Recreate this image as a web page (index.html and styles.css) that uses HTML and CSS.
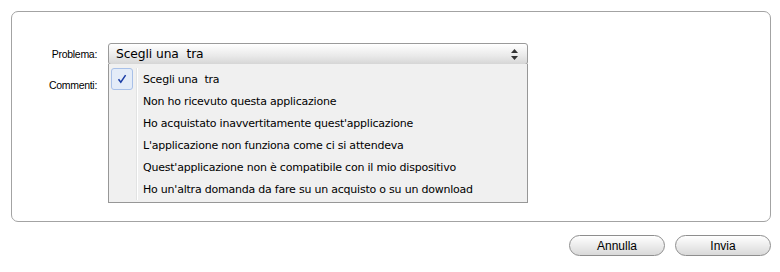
FILE: index.html
```html
<!DOCTYPE html>
<html lang="it">
<head>
    <meta charset="UTF-8">
    <title>Segnala un problema</title>
    <link rel="stylesheet" href="styles.css">
</head>
<body>

<div class="page">
    <!-- Report form -->
    <div class="panel">
        <div class="form-row">
            <label class="label">Problema:</label>
            <div class="select-wrap">
                <div class="select">
                    <span>Scegli una&nbsp; tra</span>
                    <svg class="arrows" width="7" height="11" viewBox="0 0 7 11">
                        <path d="M3.5 0 L7 4 L0 4 Z" fill="#333"/>
                        <path d="M0 7 L7 7 L3.5 11 Z" fill="#333"/>
                    </svg>
                </div>
                <!-- Open dropdown list -->
                <ul class="menu">
                    <li class="menu-item selected">
                        <span class="gutter">
                            <span class="check">
                                <svg width="10" height="10" viewBox="0 0 10 10">
                                    <path d="M1.5 5.2 L3.8 8.2 L8.6 1.2" fill="none" stroke="#1b3ea6" stroke-width="1.5"/>
                                </svg>
                            </span>
                        </span>
                        <span class="item-text">Scegli una&nbsp; tra</span>
                    </li>
                    <li class="menu-item"><span class="gutter"></span><span class="item-text">Non ho ricevuto questa applicazione</span></li>
                    <li class="menu-item"><span class="gutter"></span><span class="item-text">Ho acquistato inavvertitamente quest'applicazione</span></li>
                    <li class="menu-item"><span class="gutter"></span><span class="item-text">L'applicazione non funziona come ci si attendeva</span></li>
                    <li class="menu-item"><span class="gutter"></span><span class="item-text">Quest'applicazione non è compatibile con il mio dispositivo</span></li>
                    <li class="menu-item"><span class="gutter"></span><span class="item-text">Ho un'altra domanda da fare su un acquisto o su un download</span></li>
                </ul>
            </div>
        </div>
        <div class="form-row">
            <label class="label">Commenti:</label>
            <div class="comments"></div>
        </div>
    </div>

    <div class="actions">
        <button class="pill-btn">Annulla</button>
        <button class="pill-btn">Invia</button>
    </div>
</div>

</body>
</html>
```

FILE: styles.css
```css
body {
    margin: 0;
    background-color: #ffffff;
    font-family: 'DejaVu Sans', sans-serif;
    color: #000;
}
.page {
    width: 760px;
    padding: 11px 0 0 11px;
}
.panel {
    box-sizing: border-box;
    height: 211px;
    border: 1px solid #a3a3a3;
    border-radius: 7px;
    padding-top: 31px;
}
.form-row {
    display: flex;
    align-items: flex-start;
}
.label {
    width: 85px;
    text-align: right;
    margin-right: 11px;
    font-family: 'Liberation Sans', sans-serif;
    font-size: 10.5px;
    line-height: 22px;
    letter-spacing: -0.3px;
}
.form-row + .form-row {
    margin-top: 9px;
}
.select-wrap {
    position: relative;
    width: 420px;
}
.select {
    box-sizing: border-box;
    height: 22px;
    border: 1px solid #9a9a9a;
    border-radius: 3px;
    background: linear-gradient(#ffffff, #e9e9e9 60%, #d6d6d6);
    display: flex;
    align-items: center;
    justify-content: space-between;
    padding: 0 9px 0 7px;
    font-size: 12.3px;
    letter-spacing: -0.1px;
}
.arrows {
    display: block;
}
.menu {
    position: absolute;
    top: 21px;
    left: 0;
    width: 420px;
    box-sizing: border-box;
    margin: 0;
    padding: 4px 0 2px 2px;
    list-style: none;
    background-color: #f0f0f0;
    border: 1px solid #979797;
    border-top: none;
    z-index: 2;
}
.menu-item {
    display: flex;
    align-items: center;
    height: 22px;
    font-size: 11px;
    letter-spacing: -0.22px;
}
.gutter {
    box-sizing: border-box;
    width: 26px;
    height: 22px;
    border-right: 1px solid #e2e3e3;
    box-shadow: 1px 0 0 #ffffff;
    display: flex;
    align-items: center;
}
.check {
    box-sizing: border-box;
    width: 22px;
    height: 22px;
    border: 1px solid #a8c0e8;
    border-radius: 3px;
    background-color: #e4ecf8;
    display: flex;
    align-items: center;
    justify-content: center;
}
.check svg {
    display: block;
}
.item-text {
    padding-left: 6px;
}
.comments {
    height: 100px;
}
.actions {
    display: flex;
    justify-content: flex-end;
    gap: 10px;
    margin-top: 13px;
}
.pill-btn {
    width: 96px;
    height: 21px;
    border: 1px solid #8e8e8e;
    border-radius: 11px;
    background: linear-gradient(#ffffff, #ececec 50%, #d9d9d9);
    font-family: 'Liberation Sans', sans-serif;
    font-size: 12px;
    color: #000;
    padding: 0;
}
```
